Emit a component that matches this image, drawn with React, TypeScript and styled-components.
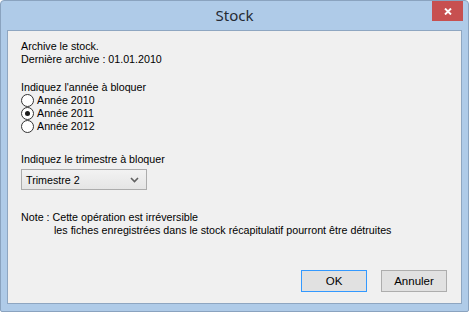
import { FC } from 'react';
import styled, { createGlobalStyle } from 'styled-components';

const Global = createGlobalStyle`
  html, body {
    margin: 0;
    padding: 0;
    background: #ffffff;
  }
  body {
    font-family: 'Liberation Sans', Arial, sans-serif;
  }
`;

const ChevronDown: FC = () => (
  <svg width="9" height="6" viewBox="0 0 9 6">
    <path d="M1 1 L4.5 4.5 L8 1" fill="none" stroke="#606060" strokeWidth="1.6" />
  </svg>
);

const CloseGlyph: FC = () => (
  <svg width="8" height="7" viewBox="0 0 8 7">
    <path d="M1 0.5 L7 6.5 M7 0.5 L1 6.5" fill="none" stroke="#ffffff" strokeWidth="1.9" />
  </svg>
);

const App: FC = () => {
  return (
    <>
      <Global />
      <Window>
        <TitleBar>
          <Title>Stock</Title>
          <CloseButton>
            <CloseGlyph />
          </CloseButton>
        </TitleBar>
        <Client>
          <Line>Archive le stock.</Line>
          <Line>Dernière archive : 01.01.2010</Line>
          <Group gap={15}>
            <Line>Indiquez l'année à bloquer</Line>
            <Radio>
              <RadioDot checked={false} />
              <span>Année 2010</span>
            </Radio>
            <Radio>
              <RadioDot checked />
              <span>Année 2011</span>
            </Radio>
            <Radio>
              <RadioDot checked={false} />
              <span>Année 2012</span>
            </Radio>
          </Group>
          <Group gap={20}>
            <Line>Indiquez le trimestre à bloquer</Line>
            <Combo>
              <span>Trimestre 2</span>
              <ChevronDown />
            </Combo>
          </Group>
          <Group gap={21}>
            <Line>Note : Cette opération est irréversible</Line>
            <Line indent>
              les fiches enregistrées dans le stock récapitulatif pourront être détruites
            </Line>
          </Group>
          <Buttons>
            <Button focused>OK</Button>
            <Button focused={false}>Annuler</Button>
          </Buttons>
        </Client>
      </Window>
    </>
  );
};

const Window = styled.div`
  width: 469px;
  height: 312px;
  box-sizing: border-box;
  background: #afcbe8;
  border: 1px solid #8aa3bf;
  border-radius: 4px 4px 2px 2px;
  display: flex;
  flex-flow: column;
  padding: 0 6px 7px 6px;
`;

const TitleBar = styled.div`
  height: 29px;
  flex: none;
  position: relative;
  display: flex;
  justify-content: center;
  align-items: center;
`;

const Title = styled.div`
  font-family: 'Noto Sans', 'Open Sans', sans-serif;
  font-size: 15px;
  color: #252a33;
  padding-bottom: 2px;
`;

const CloseButton = styled.div`
  position: absolute;
  top: 0;
  right: -1px;
  width: 31px;
  height: 20px;
  background: #c75050;
  display: flex;
  align-items: center;
  justify-content: center;
`;

const Client = styled.div`
  flex: 1;
  background: #f0f0f0;
  border: 1px solid #8ea6c1;
  padding: 9px 13px 0 13px;
  display: flex;
  flex-flow: column;
  font-size: 10.7px;
  color: #000;
`;

const Line = styled.div<{ indent?: boolean }>`
  height: 13px;
  line-height: 13px;
  white-space: nowrap;
  padding-left: ${p => (p.indent ? '33px' : '0')};
`;

const Group = styled.div<{ gap: number }>`
  margin-top: ${p => p.gap}px;
  display: flex;
  flex-flow: column;
`;

const Radio = styled.div`
  height: 13px;
  display: flex;
  align-items: center;
  gap: 3px;
  line-height: 13px;
`;

const RadioDot = styled.span<{ checked: boolean }>`
  width: 11px;
  height: 11px;
  border-radius: 50%;
  border: 1px solid #333;
  background: #fff;
  flex: none;
  position: relative;
  &::after {
    content: '';
    display: ${p => (p.checked ? 'block' : 'none')};
    position: absolute;
    left: 3px;
    top: 3px;
    width: 5px;
    height: 5px;
    border-radius: 50%;
    background: #1a1a1a;
  }
`;

const Combo = styled.div`
  margin-top: 3px;
  width: 126px;
  height: 21px;
  box-sizing: border-box;
  border: 1px solid #acacac;
  background: linear-gradient(#f2f2f2, #e5e5e5);
  display: flex;
  align-items: center;
  justify-content: space-between;
  padding: 0 7px 0 4px;
`;

const Buttons = styled.div`
  margin-top: auto;
  margin-bottom: 11px;
  display: flex;
  justify-content: flex-end;
  gap: 14px;
  padding-right: 1px;
`;

const Button = styled.div<{ focused: boolean }>`
  width: 66px;
  height: 22px;
  box-sizing: border-box;
  border: 1px solid ${p => (p.focused ? '#3399ff' : '#adadad')};
  background: #e1e1e1;
  display: flex;
  align-items: center;
  justify-content: center;
  font-size: 11.5px;
`;

export default App;
